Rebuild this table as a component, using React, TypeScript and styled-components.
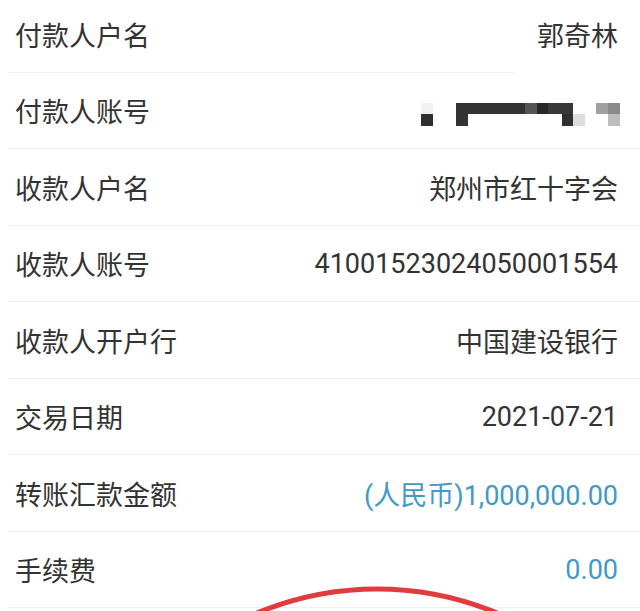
import React from 'react';
import styled, { createGlobalStyle } from 'styled-components';

const GlobalStyle = createGlobalStyle`
  html, body {
    margin: 0;
    padding: 0;
    background: #ffffff;
  }
  body {
    font-family: Roboto, "Noto Sans CJK SC", "Noto Sans", sans-serif;
  }
`;

const Page = styled.div`
  position: relative;
  width: 640px;
  height: 611px;
  overflow: hidden;
  background: #ffffff;
`;

const List = styled.div`
  display: flex;
  flex-direction: column;
  margin-top: -4px;
`;

const Row = styled.div<{ $short?: boolean }>`
  position: relative;
  display: flex;
  align-items: center;
  justify-content: space-between;
  height: 76.5px;
  box-sizing: border-box;
  padding: 0 22px 0 15px;

  &::after {
    content: '';
    position: absolute;
    left: 8px;
    right: ${p => (p.$short ? '125px' : '0')};
    bottom: 0;
    height: 1px;
    background: #efefef;
  }
`;

const Label = styled.span`
  font-size: 27px;
  color: #333333;
`;

const Value = styled.span<{ $blue?: boolean }>`
  display: flex;
  font-size: 27px;
  color: ${p => (p.$blue ? '#3f9ac6' : '#333333')};
`;

const MosaicSvg = styled.svg`
  display: block;
  margin-top: 9px;
  margin-right: -2px;
`;

const Stamp = styled.svg`
  position: absolute;
  left: 0;
  top: 0;
  pointer-events: none;
`;

const Mosaic = () => (
  <MosaicSvg width="200" height="24" viewBox="0 0 200 24">
    <rect x="1" y="0" width="12" height="11" fill="#f1f1f1" />
    <rect x="1" y="11" width="12" height="12" fill="#2f2f2f" />
    <rect x="36" y="0" width="69" height="11" fill="#333333" />
    <rect x="105" y="0" width="12" height="11" fill="#555555" />
    <rect x="117" y="0" width="11" height="11" fill="#282828" />
    <rect x="128" y="0" width="25" height="11" fill="#383838" />
    <rect x="36" y="11" width="12" height="12" fill="#333333" />
    <rect x="142" y="11" width="11" height="12" fill="#303030" />
    <rect x="153" y="11" width="12" height="12" fill="#dddddd" />
    <rect x="176" y="0" width="12" height="11" fill="#a0a0a0" />
    <rect x="188" y="0" width="12" height="11" fill="#8a8a8a" />
    <rect x="188" y="11" width="12" height="12" fill="#bdbdbd" />
  </MosaicSvg>
);

const rows: { label: string; value: React.ReactNode; blue?: boolean; short?: boolean }[] = [
  { label: '付款人户名', value: '郭奇林', short: true },
  { label: '付款人账号', value: <Mosaic /> },
  { label: '收款人户名', value: '郑州市红十字会' },
  { label: '收款人账号', value: '41001523024050001554' },
  { label: '收款人开户行', value: '中国建设银行' },
  { label: '交易日期', value: '2021-07-21' },
  { label: '转账汇款金额', value: '(人民币)1,000,000.00', blue: true },
  { label: '手续费', value: '0.00', blue: true },
];

const App = () => (
  <Page>
    <GlobalStyle />
    <List>
      {rows.map(r => (
        <Row key={r.label} $short={r.short}>
          <Label>{r.label}</Label>
          <Value $blue={r.blue}>{r.value}</Value>
        </Row>
      ))}
    </List>
    <Stamp width="640" height="611" viewBox="0 0 640 611">
      <circle cx="377" cy="901" r="312" fill="none" stroke="#e03c3e" strokeWidth="5" />
    </Stamp>
  </Page>
);

export default App;
